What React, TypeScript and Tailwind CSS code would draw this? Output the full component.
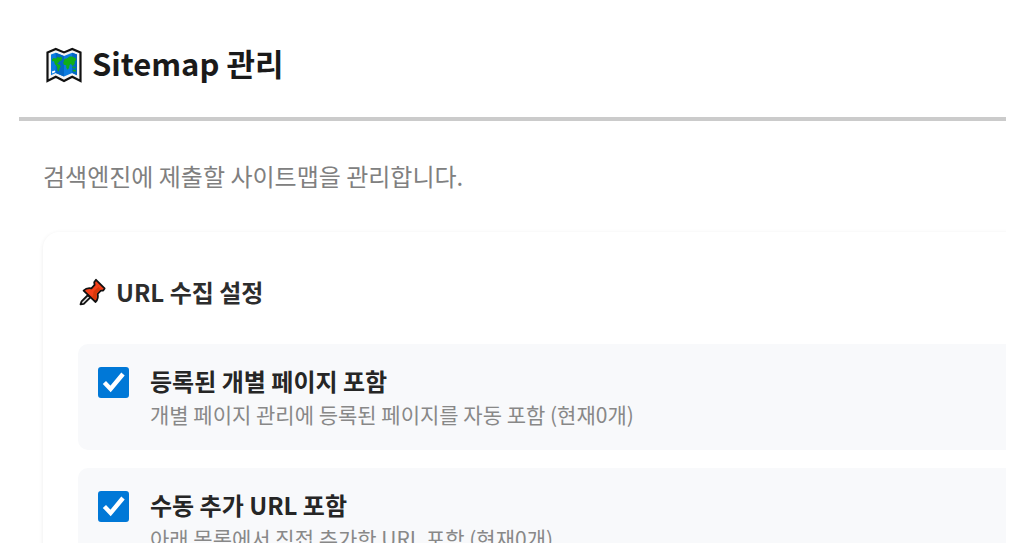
import React, { useState } from 'react';

interface CollectOption {
  id: string;
  title: string;
  description: string;
  count: number;
}

const collectOptions: CollectOption[] = [
  {
    id: 'pages',
    title: '등록된 개별 페이지 포함',
    description: '개별 페이지 관리에 등록된 페이지를 자동 포함',
    count: 0,
  },
  {
    id: 'manual',
    title: '수동 추가 URL 포함',
    description: '아래 목록에서 직접 추가한 URL 포함',
    count: 0,
  },
];

// World map on folded paper
function MapIcon() {
  return (
    <svg viewBox="0 -5 36 42" className="h-[42px] w-9 shrink-0" aria-hidden="true">
      <path
        d="M1.5 5.4 L9.8 2 L18 5.4 L26.2 2 L34.5 5.4 V34 L26.2 29.8 L18 34 L9.8 29.8 L1.5 34 Z"
        fill="#f4f4f4"
        stroke="#111"
        strokeWidth="2.2"
        strokeLinejoin="miter"
      />
      <path d="M5 7.6 L9.8 5.8 L18 9 V29.6 L9.8 26 L5 28.2 Z" fill="#0a7be0" />
      <path d="M18 9 L26.2 5.8 L31 7.6 V28.2 L26.2 26 L18 29.6 Z" fill="#0a7be0" />
      <path d="M9.8 5.8 L18 9 V29.6 L9.8 26 Z" fill="#0366c4" />
      <path d="M26.2 5.8 L31 7.6 V28.2 L26.2 26 Z" fill="#0366c4" />
      <path
        d="M6 12.4 L7.6 11 L10.4 11.4 L11.6 9.8 L13.4 10.8 L14.4 9.6 L16.4 11 L15.4 13.4 L13.6 14.2 L12 16.2 L10.8 16.4 L13.8 17.8 L14.8 19.6 L13.4 21.4 L12.8 24.6 L11.6 23.4 L11 19.4 L8.8 17 L8 14 L6 14.4 Z"
        fill="#10ae18"
      />
      <path
        d="M17.8 14.4 L18.4 11.8 L20.8 11.6 L23.6 9.4 L26.2 9.6 L30 11.4 V13.6 L28.8 14 L28.8 16.8 L27.4 18.6 L26 18.8 L25 16.8 L23.6 18 L23 21 L21.6 22.8 L20.4 21 L20.2 18.2 L18 17.8 L17 15.8 Z"
        fill="#10ae18"
      />
      <path d="M26.4 19.8 H29.6 V21.2 H26.4 Z M26.8 22.8 H29.8 V24.8 L26.8 24.2 Z" fill="#10ae18" />
      <path d="M5.8 24.6 L8.8 23.4 L9.4 25 L6.4 26.6 Z" fill="#fff" />
    </svg>
  );
}

// Red push pin
function PinIcon() {
  return (
    <svg viewBox="-1 -1 28 28" className="size-7 shrink-0" aria-hidden="true">
      <path d="M1.5 25.4 L2.6 22.4 L9 16 L11.4 18.4 L4.8 24.8 Z" fill="#ddd" stroke="#111" strokeWidth="1.8" strokeLinejoin="round" />
      <path
        d="M17 0.8 L25.6 9.4 L24.2 11.6 L21.8 11.6 L18.6 15 C19.4 18 18.6 20.8 16.6 23 L4.6 11.6 C6.8 9.4 9.6 8.8 12.4 9.4 L15.6 5.8 L15.2 3.2 Z"
        fill="#f4401a"
        stroke="#111"
        strokeWidth="1.8"
        strokeLinejoin="round"
      />
      <path d="M19.4 8 L21.6 10.2 L17.2 14.6 C17.8 17.2 17.6 19.2 16.4 21 L13.2 17.8 C15.2 15.6 13.6 13.4 15 12 Z" fill="#d8380a" />
    </svg>
  );
}

function OptionRow({ option }: { option: CollectOption }) {
  const [checked, setChecked] = useState(true);

  return (
    <label
      htmlFor={option.id}
      className="flex items-start gap-[21px] rounded-[10px] bg-[#f8f9fb] px-5 pt-[23px] pb-[17px] cursor-pointer"
    >
      <span className="relative size-[31px] shrink-0">
        <input
          id={option.id}
          type="checkbox"
          checked={checked}
          onChange={(e) => setChecked(e.target.checked)}
          className="peer block size-[31px] appearance-none rounded-[3px] border-2 border-gray-500 bg-white checked:border-[#0078d7] checked:bg-[#0078d7]"
        />
        <svg
          viewBox="0 0 31 31"
          className="pointer-events-none absolute inset-0 hidden size-[31px] peer-checked:block"
          aria-hidden="true"
        >
          <path d="M6.4 15.4 L12.6 22 L25 7" fill="none" stroke="#fff" strokeWidth="4.4" />
        </svg>
      </span>
      <span className="flex flex-col whitespace-nowrap">
        <span className="text-[24px] leading-[28px] font-bold text-[#262626]">{option.title}</span>
        <span className="text-[21px] leading-[38px] text-[#888]">
          {option.description} (현재{option.count}개)
        </span>
      </span>
    </label>
  );
}

export default function App() {
  return (
    <div className="h-screen overflow-hidden bg-white pr-[18px] pb-[7px] pl-[19px] font-['Noto_Sans_CJK_KR',sans-serif]">
      <main className="h-full overflow-hidden">
        <header className="border-b-4 border-[#cbcbcb] pt-[41px] pb-8 pl-[27px]">
          <h1 className="flex items-center gap-[10px] text-[31px] leading-[44px] font-bold text-[#1a1a1a]">
            <MapIcon />
            Sitemap 관리
          </h1>
        </header>

        <div className="pt-[37px] pl-6">
          <p className="text-[24px] leading-9 text-[#808080]">검색엔진에 제출할 사이트맵을 관리합니다.</p>

          {/* Card runs past the right edge of the panel */}
          <section className="mt-[38px] -mr-10 rounded-2xl bg-white pt-[42px] pl-[35px] shadow-[0_1px_4px_rgba(0,0,0,0.08)]">
            <h2 className="flex items-center gap-[10px] text-[24px] leading-9 font-bold text-[#2d2d2d]">
              <PinIcon />
              URL 수집 설정
            </h2>
            <div className="mt-[34px] flex flex-col gap-[18px]">
              {collectOptions.map((option) => (
                <OptionRow key={option.id} option={option} />
              ))}
            </div>
          </section>
        </div>
      </main>
    </div>
  );
}
